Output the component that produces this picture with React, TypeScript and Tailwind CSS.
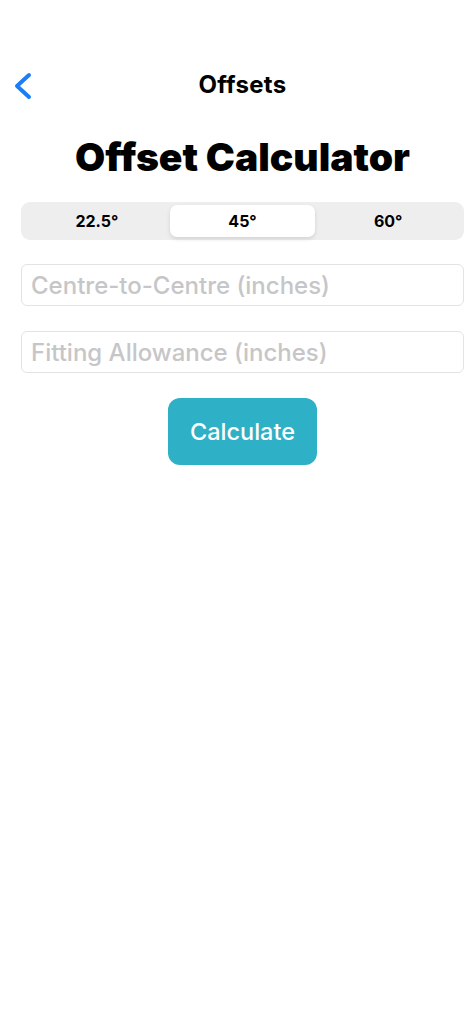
import React, { useState } from 'react';

const angles = ['22.5°', '45°', '60°'];

export default function App() {
  const [angle, setAngle] = useState('45°');

  return (
    <div className="h-screen w-full overflow-hidden bg-white pt-[63px] pl-[21px] pr-[7px] font-['Inter',sans-serif] text-black">
      {/* Nav bar */}
      <div className="relative flex h-[44px] items-center justify-center">
        <button className="absolute left-[-13px] top-[4px] p-1 text-[#1a7ff5]">
          <svg width="22" height="30" viewBox="0 0 22 30" fill="none">
            <path d="M17 4 L5 15 L17 26" stroke="currentColor" strokeWidth="4" strokeLinecap="round" strokeLinejoin="round" />
          </svg>
        </button>
        <h1 className="text-[24px] font-bold tracking-[0.3px]">Offsets</h1>
      </div>

      <h2 className="mt-[27px] text-center text-[39px] font-black leading-[46px]">
        Offset Calculator
      </h2>

      {/* Segmented control */}
      <div className="mt-[22px] flex h-[38px] rounded-[9px] bg-[#eeeeef] p-[3px]">
        {angles.map((a) => (
          <button
            key={a}
            onClick={() => setAngle(a)}
            className={`flex-1 rounded-[7px] text-[16px] font-bold ${
              angle === a ? 'bg-white shadow-[0_2px_4px_rgba(0,0,0,0.12)]' : ''
            }`}
          >
            {a}
          </button>
        ))}
      </div>

      <input
        placeholder="Centre-to-Centre (inches)"
        className="mt-[24px] block h-[42px] w-full rounded-[6px] border border-[#e3e3e3] px-[9px] text-[24px] font-medium placeholder:text-[#c6c6c8] outline-none"
      />
      <input
        placeholder="Fitting Allowance (inches)"
        className="mt-[25px] block h-[42px] w-full rounded-[6px] border border-[#e3e3e3] px-[9px] text-[24px] font-medium placeholder:text-[#c6c6c8] outline-none"
      />

      <div className="mt-[25px] flex justify-center">
        <button className="h-[67px] w-[149px] rounded-[12px] bg-[#2eb0c6] text-[23.5px] font-medium text-white">
          Calculate
        </button>
      </div>
    </div>
  );
}
